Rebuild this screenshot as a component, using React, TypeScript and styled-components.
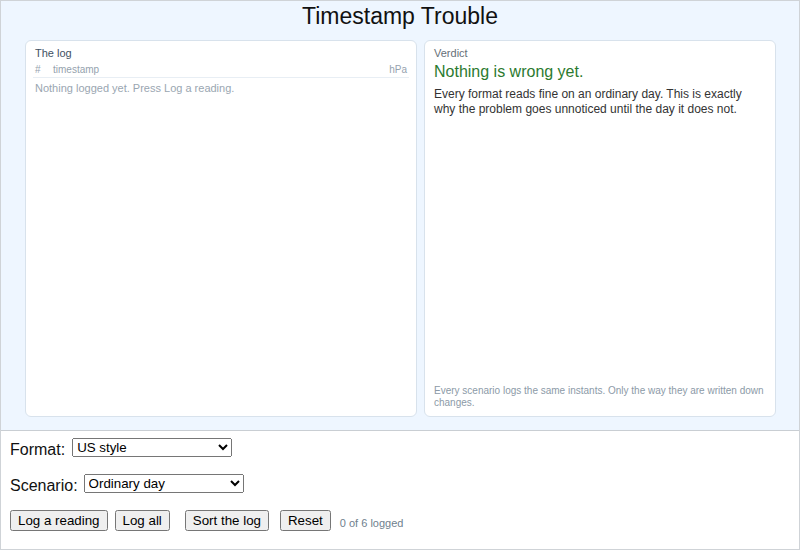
import React from 'react'
import styled, { createGlobalStyle } from 'styled-components'

const GlobalStyle = createGlobalStyle`
    html, body {
        margin: 0;
        padding: 0;
        background: #fff;
        font-family: "Liberation Sans", Arial, sans-serif;
    }
`

type GapProps = {
    gap?: number
}

const formats = ['US style', 'European style', 'ISO 8601']
const scenarios = ['Ordinary day', 'Ambiguous day', 'Clock change']

//the log card
const LogCard = () => (
    <Card>
        <CardLabel>The log</CardLabel>
        <LogTable>
            <thead>
                <tr>
                    <HeadCell style={{ width: '14px' }}>#</HeadCell>
                    <HeadCell>timestamp</HeadCell>
                    <HeadCell align="right">hPa</HeadCell>
                </tr>
            </thead>
        </LogTable>
        <EmptyNote>Nothing logged yet. Press Log a reading.</EmptyNote>
    </Card>
)

//verdict card
const VerdictCard = () => (
    <Card>
        <CardLabel muted>Verdict</CardLabel>
        <VerdictTitle>Nothing is wrong yet.</VerdictTitle>
        <VerdictBody>
            Every format reads fine on an ordinary day. This is exactly why the problem goes unnoticed until the day it does not.
        </VerdictBody>
        <FootNote>Every scenario logs the same instants. Only the way they are written down changes.</FootNote>
    </Card>
)

const App = () => (
    <>
        <GlobalStyle />
        <Frame>
            <Stage>
                <Title>Timestamp Trouble</Title>
                <Columns>
                    <LogCard />
                    <VerdictCard />
                </Columns>
            </Stage>
            <Controls>
                <Row>
                    <FieldLabel>Format:</FieldLabel>
                    <Select defaultValue={formats[0]} width={160} gap={7}>
                        {formats.map(f => <option key={f}>{f}</option>)}
                    </Select>
                </Row>
                <Row>
                    <FieldLabel>Scenario:</FieldLabel>
                    <Select defaultValue={scenarios[0]} width={160} gap={6}>
                        {scenarios.map(s => <option key={s}>{s}</option>)}
                    </Select>
                </Row>
                <ButtonRow>
                    <Button>Log a reading</Button>
                    <Button gap={7}>Log all</Button>
                    <Button gap={15}>Sort the log</Button>
                    <Button gap={11}>Reset</Button>
                    <Count>0 of 6 logged</Count>
                </ButtonRow>
            </Controls>
        </Frame>
    </>
)


/* Style */
const Frame = styled.div`
    width: 800px;
    height: 550px;
    box-sizing: border-box;
    border: 1px solid #cfd3d7;
    display: flex;
    flex-direction: column;
`
const Stage = styled.div`
    height: 430px;
    box-sizing: border-box;
    background-color: #eef6ff;
    border-bottom: 1px solid #c9ced3;
    padding: 0 24px;
    display: flex;
    flex-direction: column;
`
const Title = styled.h1`
    margin: 0 0 9px;
    font-size: 23px;
    line-height: 30px;
    font-weight: normal;
    text-align: center;
    color: #111;
`
const Columns = styled.div`
    display: grid;
    grid-template-columns: 392px 352px;
    gap: 7px;
    height: 377px;
`
const Card = styled.div`
    background: #fff;
    border: 1px solid #d8e2ec;
    border-radius: 6px;
    padding: 6px 9px 7px;
    display: flex;
    flex-direction: column;
    min-height: 0;
`
const CardLabel = styled.div<{ muted?: boolean }>`
    font-size: 11px;
    line-height: 13px;
    color: ${p => p.muted ? '#666f78' : '#3f5163'};
`
const LogTable = styled.table`
    width: calc(100% + 4px);
    margin: 3px -2px 0;
    border-collapse: collapse;
`
const HeadCell = styled.th<{ align?: string }>`
    font-size: 10px;
    line-height: 13px;
    font-weight: normal;
    color: #95a2ae;
    text-align: ${p => p.align || 'left'};
    padding: 0 2px 1px;
    border-bottom: 1px solid #e8eef4;
`
const EmptyNote = styled.div`
    margin-top: 3px;
    font-size: 11px;
    line-height: 14px;
    color: #9aa6b1;
`
const VerdictTitle = styled.div`
    margin-top: 2px;
    font-size: 16px;
    line-height: 20px;
    color: #2b7a2f;
`
const VerdictBody = styled.p`
    margin: 5px 0 0;
    font-size: 12px;
    line-height: 15px;
    color: #333;
`
const FootNote = styled.div`
    margin-top: auto;
    font-size: 10px;
    line-height: 12px;
    color: #8c9aa7;
`
const Controls = styled.div`
    flex: 1;
    padding: 7px 9px 0;
`
const Row = styled.div`
    height: 36px;
    display: flex;
    align-items: flex-start;
`
const FieldLabel = styled.label`
    margin-top: 3px;
    font-size: 16px;
    line-height: 18px;
    color: #111;
`
const Select = styled.select<{ width: number } & GapProps>`
    width: ${p => p.width}px;
    height: 19px;
    margin-left: ${p => p.gap || 0}px;
    font-family: "Liberation Sans", Arial, sans-serif;
    font-size: 13.333px;
`
const ButtonRow = styled.div`
    display: flex;
    align-items: flex-end;
`
const Button = styled.button<GapProps>`
    margin-left: ${p => p.gap || 0}px;
    font-family: "Liberation Sans", Arial, sans-serif;
    font-size: 13.333px;
`
const Count = styled.span`
    margin-left: 9px;
    font-size: 11px;
    line-height: 16px;
    color: #6f7f8e;
`

export default App
